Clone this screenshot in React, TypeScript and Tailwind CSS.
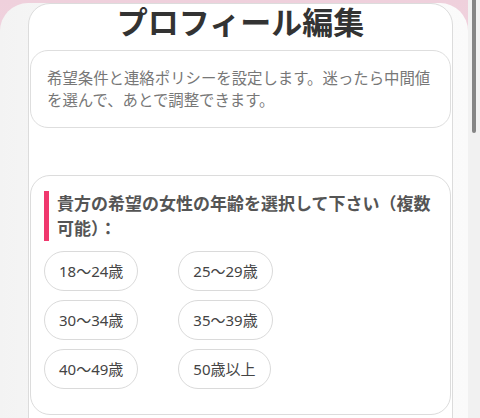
const ages = [
  ["18〜24歳", "25〜29歳"],
  ["30〜34歳", "35〜39歳"],
  ["40〜49歳", "50歳以上"],
];

const jp = { fontFamily: '"Noto Sans", "Noto Sans CJK JP", sans-serif' };

function Chip({ label }: { label: string }) {
  return (
    <button className="h-[40px] rounded-full border border-[#dadada] bg-white px-[14px] text-[15px] leading-none text-[#444]">
      {label}
    </button>
  );
}

export default function App() {
  return (
    <div className="relative h-[418px] w-[480px] overflow-hidden bg-gradient-to-b from-[#efd0dc] to-[#f8e8ef]" style={jp}>
      <div className="mt-[3px] mr-[12px] h-full rounded-t-[28px] bg-gradient-to-r from-[#f3f3f3] via-white to-[#fafafa] pl-[28px] pr-[15px]">
        <div className="h-full rounded-t-[22px] border border-[#dcdcdc] bg-white px-[1px]">
          <h1 className="-mt-[2px] text-center text-[31px] font-bold leading-[40px] text-[#333]">プロフィール編集</h1>

          <div className="mt-[8px] rounded-[18px] border border-[#dedede] bg-white pt-[17px] pr-[12px] pb-[15px] pl-[16px]">
            <p className="text-[15.4px] leading-[22px] text-[#777]">
              希望条件と連絡ポリシーを設定します。迷ったら中間値を選んで、あとで調整できます。
            </p>
          </div>

          <section className="mt-[47px] rounded-[20px] border border-[#dcdcdc] bg-white pt-[15px] pr-[12px] pb-[25px] pl-[13px]">
            <div className="flex gap-[8px]">
              <span className="w-[5px] shrink-0 bg-[#f0386e]" />
              <h2 className="text-[17px] font-bold leading-[25px] text-[#555]">
                貴方の希望の女性の年齢を選択して下さい（複数可能）：
              </h2>
            </div>
            <div className="mt-[10px] flex flex-col gap-[9px]">
              {ages.map((row) => (
                <div key={row[0]} className="flex gap-[40px]">
                  {row.map((a) => (
                    <Chip key={a} label={a} />
                  ))}
                </div>
              ))}
            </div>
          </section>
        </div>
      </div>

      <div className="absolute right-0 top-0 h-full w-[12px] bg-[#f1f1f1]">
        <div className="mx-auto h-[133px] w-[4px] rounded-b-full bg-[#858585]" />
      </div>
    </div>
  );
}
